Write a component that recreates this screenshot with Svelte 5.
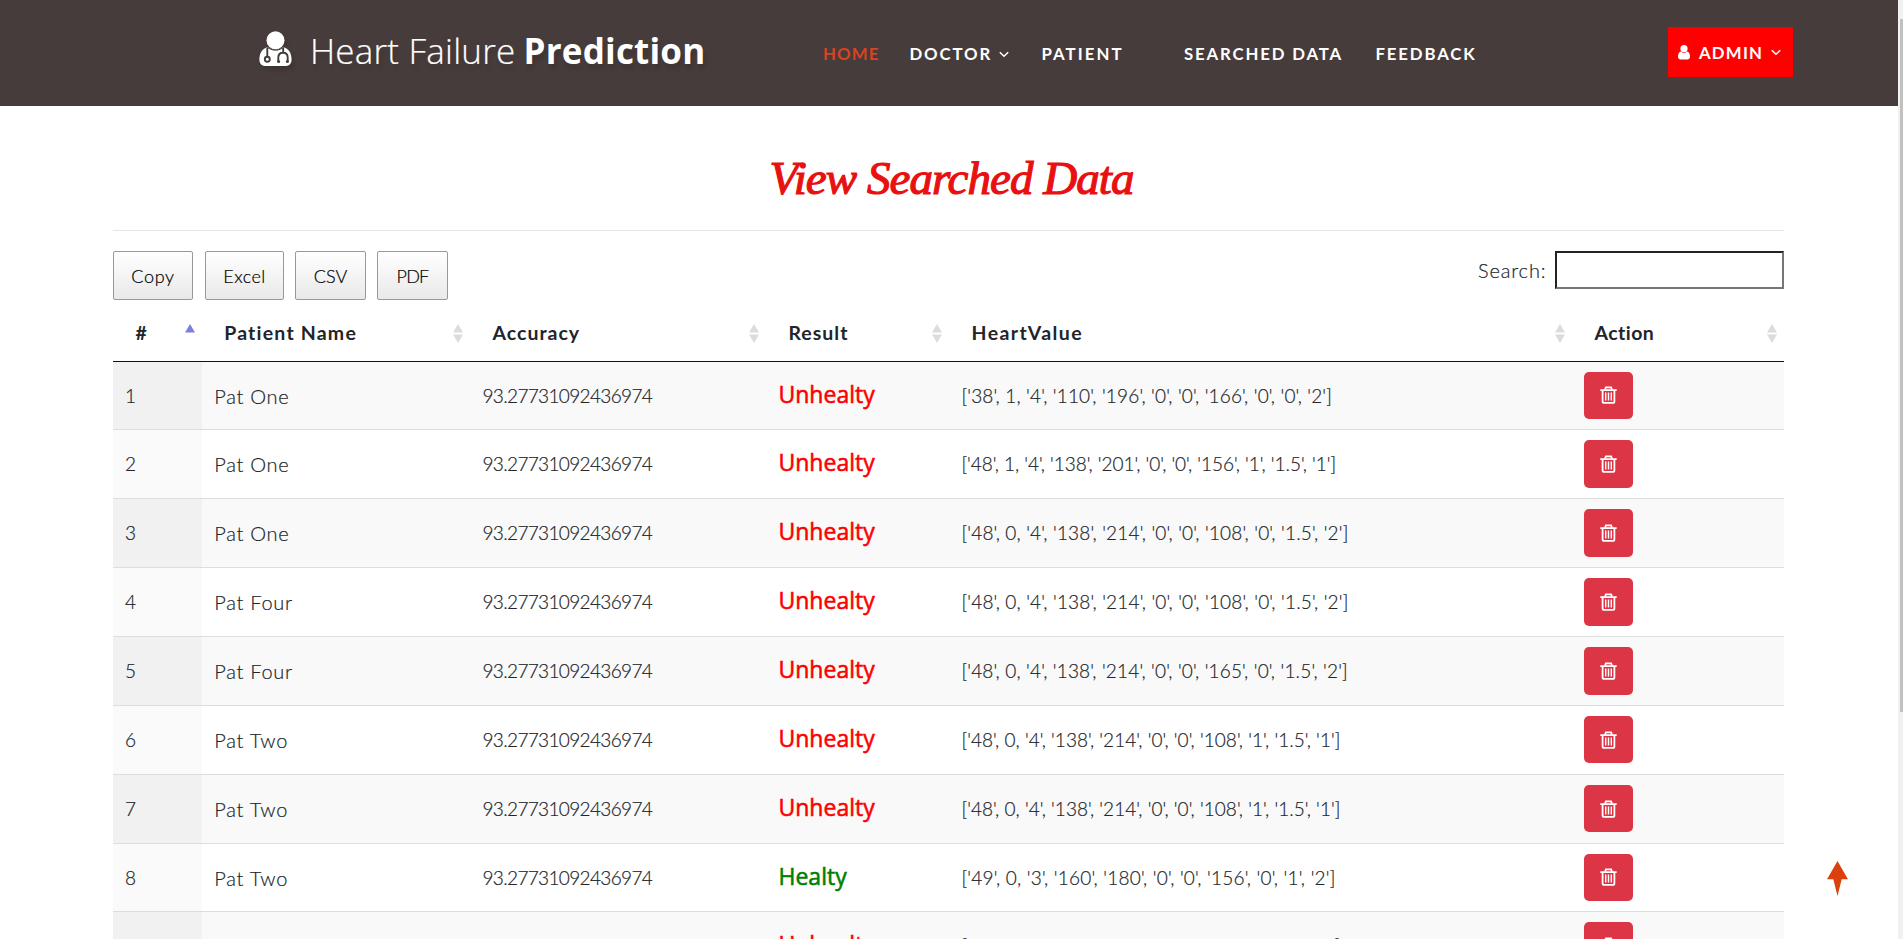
<script>
  const columns = ['#', 'Patient Name', 'Accuracy', 'Result', 'HeartValue', 'Action'];
  const accuracy = '93.27731092436974';
  const rows = [
    { name: 'Pat One', healthy: false, track: 0.17, value: "['38', 1, '4', '110', '196', '0', '0', '166', '0', '0', '2']" },
    { name: 'Pat One', healthy: false, track: -0.02, value: "['48', 1, '4', '138', '201', '0', '0', '156', '1', '1.5', '1']" },
    { name: 'Pat One', healthy: false, track: 0.18, value: "['48', 0, '4', '138', '214', '0', '0', '108', '0', '1.5', '2']" },
    { name: 'Pat Four', healthy: false, track: 0.18, value: "['48', 0, '4', '138', '214', '0', '0', '108', '0', '1.5', '2']" },
    { name: 'Pat Four', healthy: false, track: 0.17, value: "['48', 0, '4', '138', '214', '0', '0', '165', '0', '1.5', '2']" },
    { name: 'Pat Two', healthy: false, track: 0.05, value: "['48', 0, '4', '138', '214', '0', '0', '108', '1', '1.5', '1']" },
    { name: 'Pat Two', healthy: false, track: 0.05, value: "['48', 0, '4', '138', '214', '0', '0', '108', '1', '1.5', '1']" },
    { name: 'Pat Two', healthy: true, track: 0.23, value: "['49', 0, '3', '160', '180', '0', '0', '156', '0', '1', '2']" },
    { name: 'Pat Two', healthy: false, track: 0.05, value: "['48', 0, '4', '138', '214', '0', '0', '108', '1', '1.5', '1']" }
  ];
</script>

{#snippet chevron()}
  <svg class="chev" width="10" height="7" viewBox="0 0 10 7"><path d="M.8 1.2 5 5.3 9.2 1.2" fill="none" stroke="#fff" stroke-width="1.5" /></svg>
{/snippet}

<div class="page">
  <header>
    <div class="brand">
      <svg class="doctor" width="33" height="36" viewBox="0 0 33 36">
        <path fill="#fff" d="M9 16.2C3 17 .4 22.500 .4 28.600c0 4 2.300 6.400 5.600 6.400h21c3.300 0 5.600-2.400 5.600-6.400C32.600 22.500 30 17 24 16.200c-2 1.700-4.600 2.600-7.500 2.600S11 17.900 9 16.200z" />
        <circle cx="16.500" cy="9.300" r="9" fill="#fff" />
        <path d="M8.300 17v8.500M24.200 17v4.200M19.300 31v-4.400c0-3 2-4.800 4.700-4.800s4.700 1.800 4.700 4.800V31" fill="none" stroke="#463c3b" stroke-width="1.900" />
        <circle cx="8.300" cy="28.300" r="2.500" fill="#fff" stroke="#463c3b" stroke-width="1.900" />
        <circle cx="19.600" cy="30.600" r="1.500" fill="#463c3b" /><circle cx="28.400" cy="30.600" r="1.500" fill="#463c3b" />
        <path d="M7.500 15.300c2.500 2.600 5.500 3.900 9 3.900s6.500-1.300 9-3.900" fill="none" stroke="#463c3b" stroke-width="1" />
      </svg>
      <span class="light">Heart Failure</span><span class="bold">Prediction</span>
    </div>
    <nav>
      <a class="active">HOME</a>
      <a class="doc">DOCTOR{@render chevron()}</a>
      <a class="pat">PATIENT</a>
      <a>SEARCHED DATA</a>
      <a>FEEDBACK</a>
    </nav>
    <div class="admin">
      <svg width="12" height="15" viewBox="0 0 12 15"><circle cx="6" cy="3.700" r="3.600" fill="#fff" /><path fill="#fff" d="M3 6.400C1 6.600 0 9 0 11.600 0 13.500 1 14.600 2.600 14.600h6.800c1.600 0 2.600-1.100 2.600-3C12 9 11 6.600 9 6.400 8.200 7.300 7.200 7.800 6 7.800S3.800 7.300 3 6.400z" /></svg>
      <span>ADMIN</span>
      {@render chevron()}
    </div>
  </header>

  <main>
    <h1>View Searched Data</h1>
    <div class="tools">
      <div class="buttons">
        <button class="copy">Copy</button><button class="excel">Excel</button><button class="csv">CSV</button><button class="pdf">PDF</button>
      </div>
      <label><span>Search:</span><input type="text" /></label>
    </div>

    <div class="table">
      <div class="head grid">
        {#each columns as c, i}
          <div class="th c{i}">
            <span>{c}</span>
            <svg width="10" height="19" viewBox="0 0 10 19">
              {#if i === 0}
                <path d="M0 8.500 5 0l5 8.500z" fill="#7b80dd" />
              {:else}
                <path d="M0 8.500 5 0l5 8.500zM0 10.500h10l-5 8.500z" fill="#dcdcdc" />
              {/if}
            </svg>
          </div>
        {/each}
      </div>
      {#each rows as r, i}
        <div class="row grid">
          <div class="td num">{i + 1}</div>
          <div class="td name">{r.name}</div>
          <div class="td acc">{accuracy}</div>
          <div class="td result" class:ok={r.healthy}>{r.healthy ? 'Healty' : 'Unhealty'}</div>
          <div class="td" style="letter-spacing:{r.track}px">{r.value}</div>
          <div class="td">
            <button class="del" aria-label="Delete">
              <svg width="17" height="18" viewBox="0 0 17 18" fill="none" stroke="#fff">
                <path stroke-width="1.800" d="M.3 4.100h16.400M2.600 4.500v10.700c0 1.100.5 1.700 1.500 1.700h8.800c1 0 1.500-.6 1.500-1.700V4.500M5 3.800 5.900 1.300h5.200l.9 2.500" />
                <path stroke-width="1.400" d="M5.700 6.500v8M8.500 6.500v8M11.300 6.500v8" />
              </svg>
            </button>
          </div>
        </div>
      {/each}
    </div>
  </main>

  <svg class="top" width="21" height="35" viewBox="0 0 21 35"><path fill="#d9420f" d="M10.500 0 21 18.200h-6.300L10.500 35 6.300 18.200H0z" /></svg>
  <div class="scroll"><div class="thumb"></div></div>
</div>

<style>
  :global(body) { margin: 0; background: #fff; overflow: hidden; }
  .page { position: relative; height: 939px; overflow: hidden; font-family: Lato, sans-serif; font-weight: 300; font-size: 19px; color: #212529; }
  header { display: flex; align-items: flex-start; height: 106px; width: 1898px; background: #463c3b; color: #fff; }
  .brand { display: flex; width: 564px; padding: 31px 0 0 259px; font-family: 'Open Sans', sans-serif; font-size: 35px; line-height: 40px; letter-spacing: .2px; white-space: nowrap; text-shadow: 2px 5px 4px rgba(0, 0, 0, .14); }
  .doctor { flex: none; margin-right: 18px; filter: drop-shadow(2px 4px 2px rgba(0, 0, 0, .14)); }
  .light { width: 213.500px; -webkit-text-stroke: .2px #fff; }
  .bold { font-weight: 700; }
  nav { display: grid; grid-template-columns: 86.500px 132px 142.500px 191.500px 110px; width: 845px; padding-top: 43.500px; font-size: 16.800px; line-height: 20px; font-weight: 700; letter-spacing: 1.850px; white-space: nowrap; }
  .active { color: #d9431f; letter-spacing: 1.100px; }
  .chev { margin-left: 7px; vertical-align: 2px; }
  .pat { letter-spacing: 2.050px; }
  .admin { display: flex; align-items: center; box-sizing: border-box; width: 125px; height: 50px; margin-top: 27px; padding: 1px 0 0 10px; background: red; font-size: 16.800px; font-weight: 700; letter-spacing: 1.200px; }
  .admin span { width: 64px; margin-left: 9px; }
  .admin .chev { margin-left: 8px; }
  main { width: 1671px; margin-left: 113px; }
  h1 { box-sizing: border-box; height: 125px; margin: 0; padding: 45px 0 0 6px; border-bottom: 1px solid #e5e5e5; text-align: center; font: italic 400 47px/54px 'Liberation Serif', serif; letter-spacing: -.95px; color: #e81010; -webkit-text-stroke: 1.200px #e81010; }
  .tools { box-sizing: border-box; display: flex; justify-content: space-between; align-items: flex-start; height: 74px; padding-top: 20px; }
  .buttons { display: flex; }
  .buttons button { box-sizing: border-box; height: 49px; padding: 0; border: 1px solid #999; border-radius: 2px; background: linear-gradient(#fff, #e9e9e9); font: 300 18px Lato, sans-serif; color: #000; -webkit-text-stroke: .2px; }
  .copy { width: 80px; margin-right: 12px; letter-spacing: .7px; }
  .excel { width: 79px; margin-right: 11px; letter-spacing: .45px; }
  .csv { width: 71px; margin-right: 11px; }
  .buttons .pdf { width: 71px; letter-spacing: -.7px; }
  label { display: flex; font-size: 20px; line-height: 38px; letter-spacing: .850px; -webkit-text-stroke: .2px; }
  label span { width: 77px; }
  input { box-sizing: border-box; width: 229px; height: 38px; border: 2px solid; border-color: #222 #767676 #767676 #222; background: #fff; }
  .grid { display: grid; grid-template-columns: 88.700px 268.300px 296px 183px 623px 212px; }
  .head { box-sizing: border-box; height: 56.600px; border-bottom: 1px solid #111; font-size: 19.500px; font-weight: 700; letter-spacing: 1px; }
  .th { display: flex; justify-content: space-between; padding: 19px 7px 0 22.500px; }
  .th span { line-height: 20px; margin-top: -1px; }
  .c1 { letter-spacing: 1.200px; }
  .c4 { letter-spacing: 1.450px; }
  .c5 { letter-spacing: .45px; }
  .row { box-sizing: border-box; height: 68.860px; border-top: 1px solid #ddd; }
  .head + .row { height: 67.860px; border-top: 0; }
  .row:nth-child(even) { background: #f9f9f9; }
  .row:nth-child(even) .num { background: #f1f1f1; }
  .num { background: #fafafa; }
  .td { padding: 10px 0 0 12.500px; line-height: 48px; white-space: nowrap; -webkit-text-stroke: .2px; }
  .row .num { padding-left: 12px; }
  .name { font-size: 20px; letter-spacing: .75px; }
  .acc { letter-spacing: -.65px; }
  .result { font: 500 23px/45px 'Open Sans', sans-serif; color: red; -webkit-text-stroke: .55px; }
  .ok { color: green; }
  .del { display: flex; align-items: center; justify-content: center; width: 49px; height: 47.500px; padding: 0; border: 0; border-radius: 5px; background: #dc3545; }
  .top { position: absolute; left: 1827px; top: 861px; }
  .scroll { position: absolute; top: 0; right: 0; display: flow-root; width: 5px; height: 939px; background: #f1f1f1; }
  .thumb { height: 693px; margin: 19px 0 0 2px; background: #c1c1c1; }
</style>
